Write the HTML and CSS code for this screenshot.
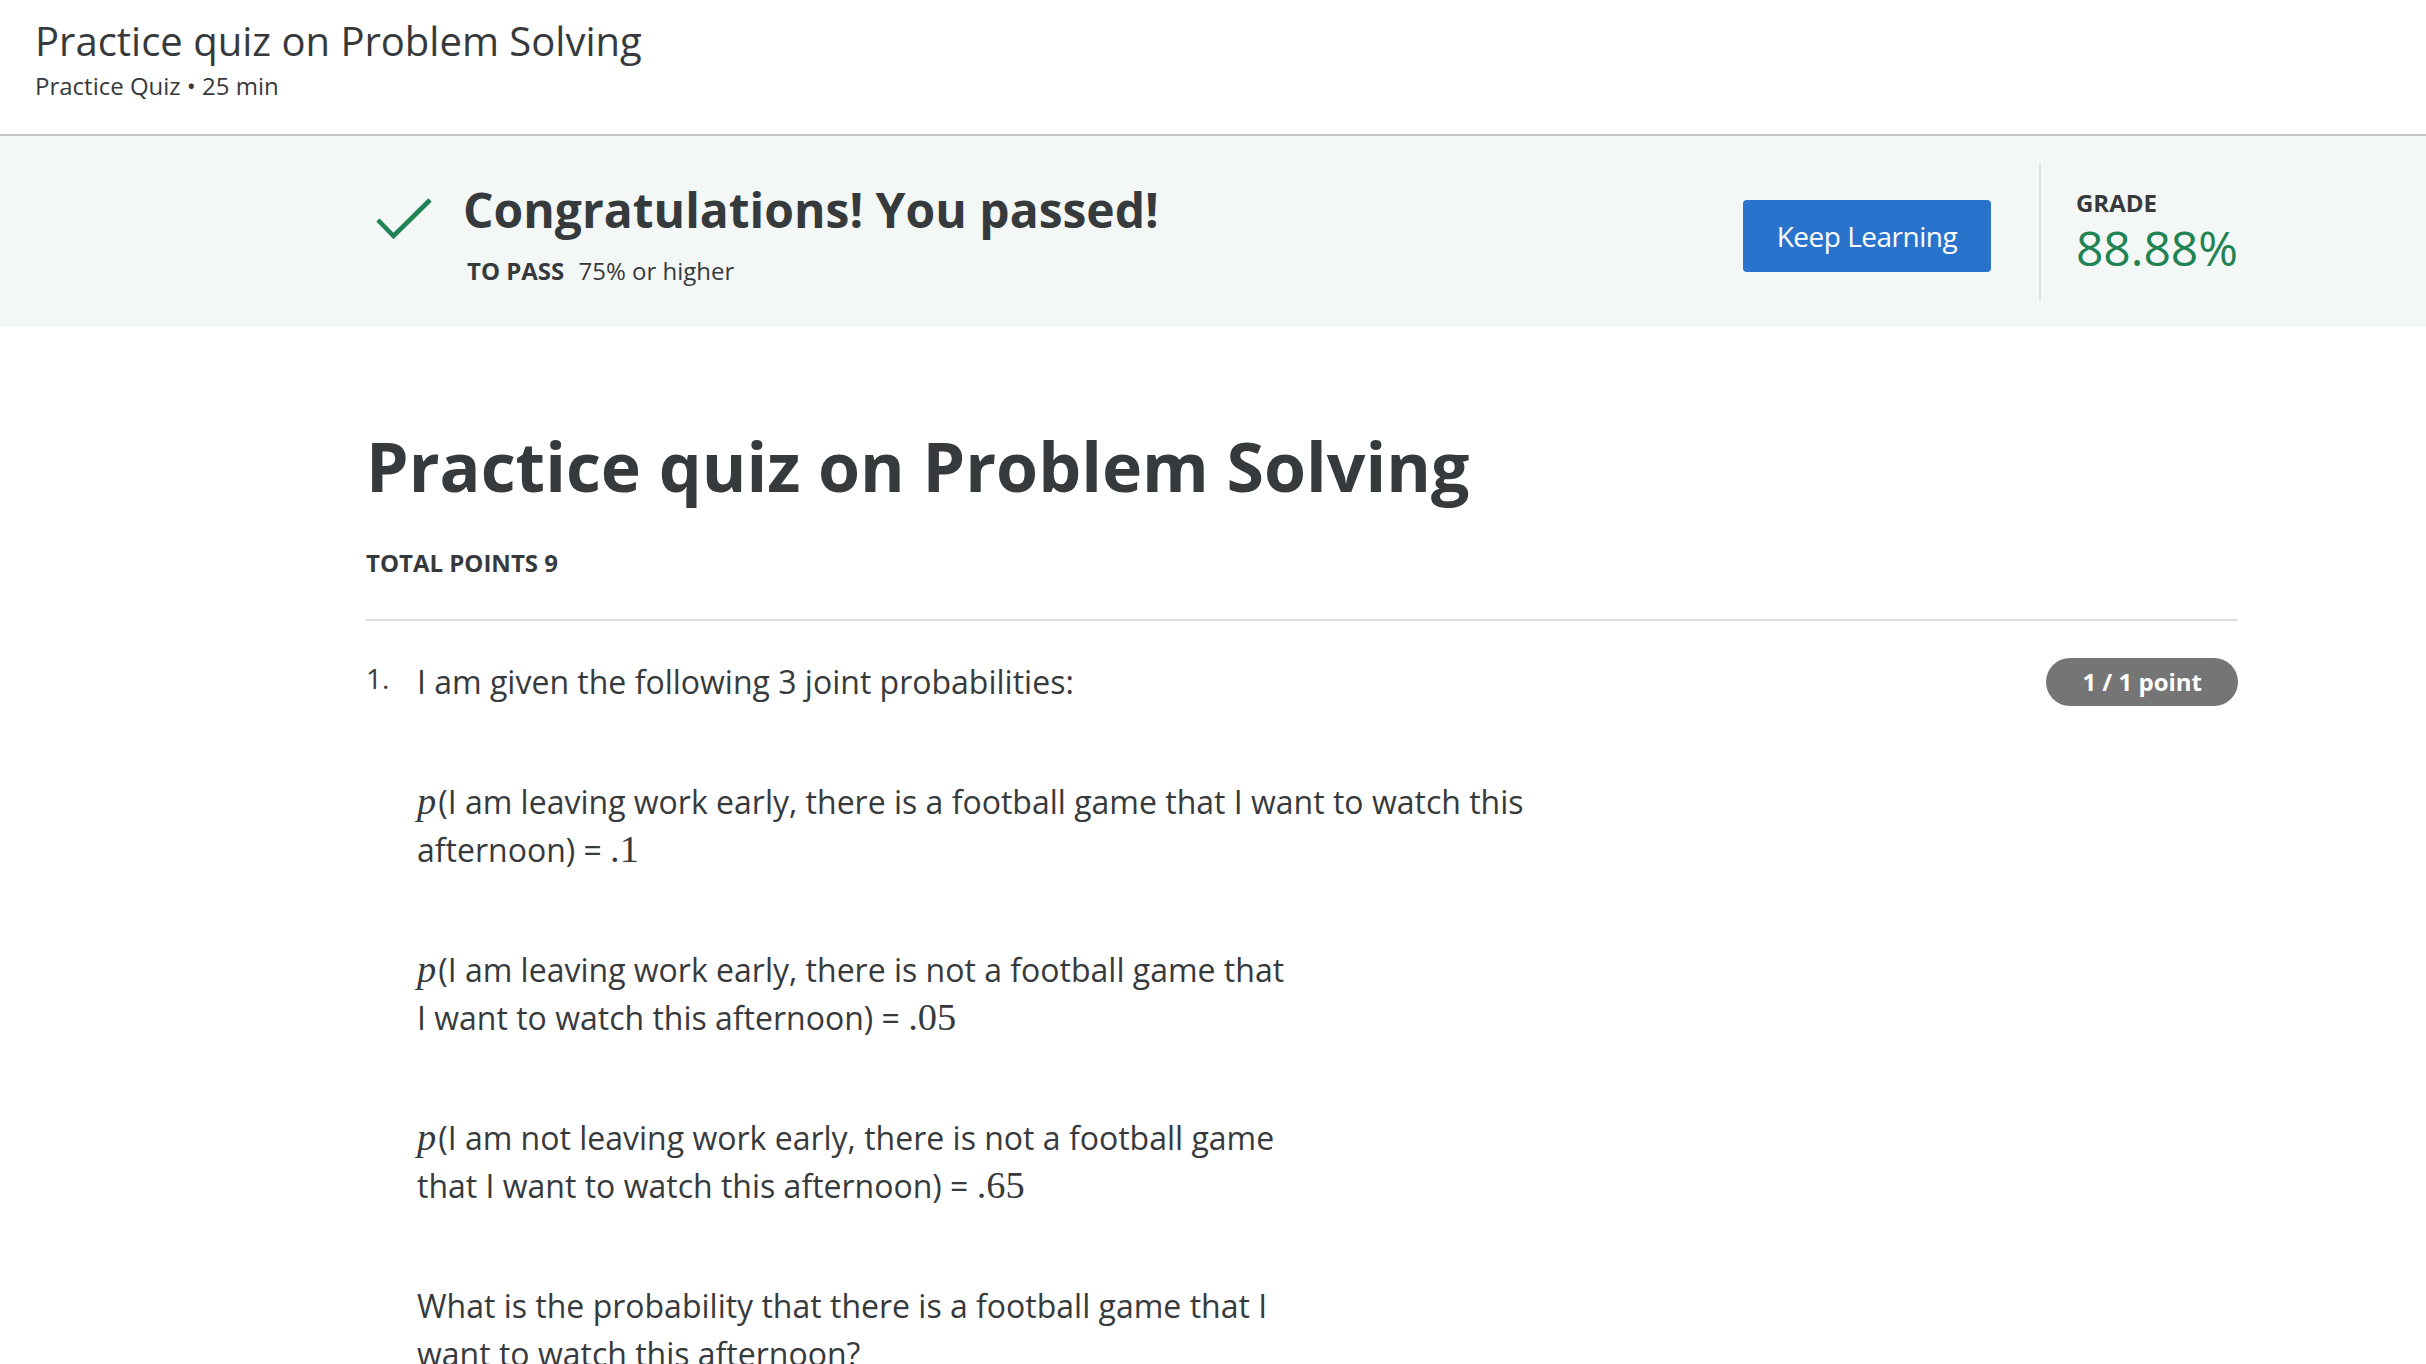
FILE: index.html
```html
<!DOCTYPE html>
<html lang="en">
<head>
<meta charset="utf-8">
<title>Practice quiz on Problem Solving</title>
<link rel="stylesheet" href="styles.css">
</head>
<body>
<header class="top-header">
  <div class="header-title">Practice quiz on Problem Solving</div>
  <div class="header-sub">Practice Quiz • 25 min</div>
</header>

<section class="banner">
  <div class="container banner-row">
    <div class="result">
      <svg class="check" width="56" height="42" viewBox="0 0 56 42" aria-hidden="true">
        <path d="M2 22 L17.5 38 L54 2" fill="none" stroke="#1f8354" stroke-width="4.6"/>
      </svg>
      <div class="result-text">
        <h2 class="congrats">Congratulations! You passed!</h2>
        <div class="to-pass"><span class="label">TO PASS</span> 75% or higher</div>
      </div>
    </div>
    <div class="actions">
      <button class="btn-primary">Keep Learning</button>
      <div class="vdivider"></div>
      <div class="grade">
        <div class="grade-label">GRADE</div>
        <div class="grade-value">88.88%</div>
      </div>
    </div>
  </div>
</section>

<main class="container main">
  <h1 class="quiz-title">Practice quiz on Problem Solving</h1>
  <div class="total-points">TOTAL POINTS 9</div>
  <hr class="rule">

  <div class="question">
    <div class="q-num">1.</div>
    <div class="q-body">
      <p class="q-line">I am given the following 3 joint probabilities:</p>
      <p class="q-para"><span class="math-i">p</span>(I am leaving work early, there is a football game that I want to watch this<br>afternoon) = <span class="math">.1</span></p>
      <p class="q-para"><span class="math-i">p</span>(I am leaving work early, there is not a football game that<br>I want to watch this afternoon) = <span class="math">.05</span></p>
      <p class="q-para"><span class="math-i">p</span>(I am not leaving work early, there is not a football game<br>that I want to watch this afternoon) = <span class="math">.65</span></p>
      <p class="q-para">What is the probability that there is a football game that I<br>want to watch this afternoon?</p>
    </div>
    <div class="badge">1 / 1 point</div>
  </div>
</main>
</body>
</html>
```

FILE: styles.css
```css
html, body {
  margin: 0;
  padding: 0;
  background: #ffffff;
}

body {
  font-family: "Open Sans", "Noto Sans", "Liberation Sans", sans-serif;
  color: #373a3c;
  overflow: hidden;
}

.top-header {
  padding: 16px 32px 28px 35px;
  border-bottom: 2px solid #c6c6c6;
}

.header-title {
  font-size: 40px;
  line-height: 50px;
  font-weight: 400;
}

.header-sub {
  font-size: 24px;
  line-height: 40px;
}

.container {
  margin-left: 366px;
  width: 1872px;
}

.banner {
  background: #f3f8f6;
  padding: 28px 0 27px;
}

.banner-row {
  display: flex;
  align-items: center;
  justify-content: space-between;
  height: 136px;
}

.result {
  display: flex;
  align-items: flex-start;
  padding-top: 4px;
}

.check {
  display: block;
  margin: 18px 31px 0 10px;
}

.congrats {
  margin: 0 0 13px;
  font-size: 48px;
  line-height: 60px;
  font-weight: 700;
}

.to-pass {
  font-size: 24px;
  line-height: 36px;
  padding-left: 4px;
}

.to-pass .label {
  font-weight: 700;
  margin-right: 8px;
}

.actions {
  display: flex;
  align-items: center;
  height: 100%;
}

.btn-primary {
  width: 248px;
  height: 72px;
  margin-top: 8px;
  border: none;
  border-radius: 4px;
  background: #2a73cc;
  color: #ffffff;
  font-family: "Open Sans", "Noto Sans", sans-serif;
  font-size: 28px;
  letter-spacing: -0.5px;
  line-height: 72px;
  padding: 0;
}

.vdivider {
  width: 2px;
  height: 136px;
  background: #dcdfde;
  margin-left: 48px;
}

.grade {
  padding-left: 35px;
}

.grade-label {
  font-size: 24px;
  line-height: 32px;
  font-weight: 700;
}

.grade-value {
  font-size: 48px;
  line-height: 58px;
  color: #1f8354;
}

.main {
  padding-top: 98px;
}

.quiz-title {
  margin: 0;
  font-size: 68px;
  line-height: 82px;
  font-weight: 700;
}

.total-points {
  margin-top: 38px;
  font-size: 24px;
  line-height: 36px;
  font-weight: 700;
}

.rule {
  margin: 38px 0 0;
  border: none;
  height: 2px;
  background: #e1e1e1;
}

.question {
  display: flex;
  align-items: flex-start;
  margin-top: 37px;
}

.q-num {
  width: 51px;
  flex: none;
  font-size: 28px;
  line-height: 40px;
}

.q-body {
  flex: 1;
  font-size: 32px;
  line-height: 48px;
}

.q-line {
  margin: 0;
}

.q-para {
  margin: 72px 0 0;
}

.math-i {
  font-family: "Liberation Serif", "DejaVu Serif", serif;
  font-style: italic;
  font-size: 1.2em;
  line-height: 0;
  margin-right: 2px;
}

.math {
  font-family: "Liberation Serif", "DejaVu Serif", serif;
  font-size: 1.2em;
  line-height: 0;
}

.badge {
  flex: none;
  height: 48px;
  line-height: 48px;
  padding: 0 36px;
  border-radius: 24px;
  background: #757575;
  color: #ffffff;
  font-size: 24px;
  font-weight: 700;
}
```
